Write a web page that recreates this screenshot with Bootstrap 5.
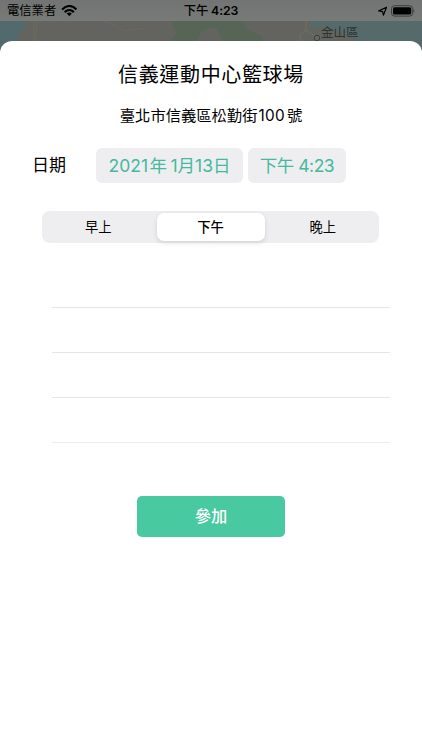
<!DOCTYPE html>
<html lang="zh-Hant">
<head>
<meta charset="utf-8">
<meta name="viewport" content="width=device-width, initial-scale=1">
<title>信義運動中心籃球場</title>
<link href="https://cdn.jsdelivr.net/npm/bootstrap@5.3.0/dist/css/bootstrap.min.css" rel="stylesheet">
<style>
body{font-family:Inter,"Noto Sans CJK TC",sans-serif;color:#000;height:750px;background:#fff;line-height:1}
.status{height:21px;background:linear-gradient(#717472,#777a77);font-size:12.3px;padding:2px 7px 0 7px;z-index:2}
.status .side{flex:1 1 0}
.clock{font-weight:600;letter-spacing:-.1px}
.clock .cjk{font-weight:500}
.map{height:40px;margin-bottom:-20px;width:422px}
.sheet{height:709px;background:#fff;border-radius:12px 12px 0 0;padding:0 1px}
.place{font-size:20px;letter-spacing:.65px;line-height:30px;padding-top:19px}
.address{font-size:15.3px;line-height:22px;margin-top:15px}
.address span{letter-spacing:.3px;margin:0 2px 0 1px}
.when{margin:21px 0 0 31px;height:35px}
.when-label{font-size:17px;width:63px;margin-right:1px}
.chip{height:35px;background:#eeeef0;border-radius:6px;color:#45b99f;font-size:17.5px;border:0;padding:0}
.chip-date{width:147px;word-spacing:-1.5px}
.chip-date span{margin-left:1.5px}
.chip-time{width:98px;margin-left:5px;letter-spacing:-.5px}
.segments{height:32px;width:337px;background:#eeeef0;border-radius:8px;margin:28px 0 0 41px;padding:2px}
.segments button{border:0;background:none;font-size:13.3px;border-radius:7px;height:28px;padding:1px 0 0;color:#000;flex:1 1 0}
.segments .first{padding-right:4px}
.segments .last{padding-left:4px}
.segments .on{flex:0 0 108px;background:#fff;box-shadow:0 2px 5px rgba(0,0,0,.12);font-weight:500}
.slots{margin:20px 31px 0 51px}
.slots li{height:45px;border-bottom:1px solid #e6e6e7}
.slots li:last-child{border-bottom-color:#ececed}
.join{width:148px;height:41px;background:#48c9a0;color:#fff;font-size:16.3px;font-weight:500;border:0;border-radius:5px;margin-top:53px;padding:0}
.join:hover{background:#3fbd95;color:#fff}
</style>
</head>
<body class="overflow-hidden">
<header class="status d-flex align-items-center position-relative">
  <div class="side d-flex align-items-center">
    <span>電信業者</span>
    <svg class="ms-1" width="17" height="13" viewBox="0 0 17 13" aria-hidden="true"><g transform="translate(.8 -.8)"><g fill="none" stroke="#000" stroke-width="2.1"><path d="M1.3 5.2Q8.5-1.6 15.7 5.2"/><path d="M3.9 7.9Q8.5 3.7 13.1 7.9"/></g><path d="M5.9 9.3Q8.5 7.2 11.1 9.3L8.5 12Z"/></g></svg>
  </div>
  <div class="clock"><span class="cjk">下午</span> 4:23</div>
  <div class="side d-flex align-items-center justify-content-end">
    <svg width="42" height="13" viewBox="0 0 42 13" aria-hidden="true"><g transform="translate(.6 -.8)"><path d="M5.1 6.7L12.9 3 9.8 11 9 7.4Z" fill="none" stroke="#000" stroke-width="1.2" stroke-linejoin="round"/><rect x="17.9" y="1.5" width="21.2" height="10.4" rx="3" fill="none" stroke="#3b3e3c"/><rect x="19.4" y="3" width="18.2" height="7.4" rx="1.5"/><path d="M40 5q1.8 1.7 0 3.4z" fill="#3b3e3c"/></g></svg>
  </div>
</header>
<svg class="map d-block" viewBox="0 0 422 40" aria-hidden="true">
  <rect width="422" height="40" fill="#63645f"/>
  <path d="M0 0H25L26 6 20 10 17 20V40H0Z" fill="#526a6d"/>
  <path d="M34 0V20M37 0L35 20M104 0L125 10 145 7" fill="none" stroke="#706d5c" stroke-width=".7"/>
  <path d="M171 0H244L246 8 263 16V20H223L219 12 216 6 209 7 201 11 197 20H170L176 12Z" fill="#566556"/>
  <path d="M310 0H422V40H362L353 20 341 14 323 8 312 10Z" fill="#566a6c"/>
  <path d="M303 0L312 8 324 6 347 14 358 20H301L308 10Z" fill="#62655f"/>
  <path d="M306 0V9L300 14 301 20M306 9L316 16" fill="none" stroke="#706f5f" stroke-width="1"/>
  <circle cx="317" cy="17" r="2.7" fill="#666965" stroke="#343735" stroke-width=".8"/>
  <text x="321" y="15.5" font-size="12.5" fill="#303331">金山區</text>
</svg>
<main class="sheet position-relative">
  <h1 class="place text-center fw-normal mb-0">信義運動中心籃球場</h1>
  <p class="address text-center mb-0">臺北市信義區松勤街<span>100</span>號</p>
  <div class="when d-flex align-items-center">
    <span class="when-label">日期</span>
    <button type="button" class="chip chip-date text-nowrap">2021<span>年</span> 1月13日</button>
    <button type="button" class="chip chip-time text-nowrap">下午 4:23</button>
  </div>
  <div class="segments d-flex" role="group" aria-label="時段">
    <button type="button" class="first">早上</button>
    <button type="button" class="on">下午</button>
    <button type="button" class="last">晚上</button>
  </div>
  <ul class="slots list-unstyled mb-0"><li></li><li></li><li></li><li></li></ul>
  <div class="text-center"><button type="button" class="join btn">參加</button></div>
</main>
<script src="https://cdn.jsdelivr.net/npm/bootstrap@5.3.0/dist/js/bootstrap.bundle.min.js"></script>
</body>
</html>
